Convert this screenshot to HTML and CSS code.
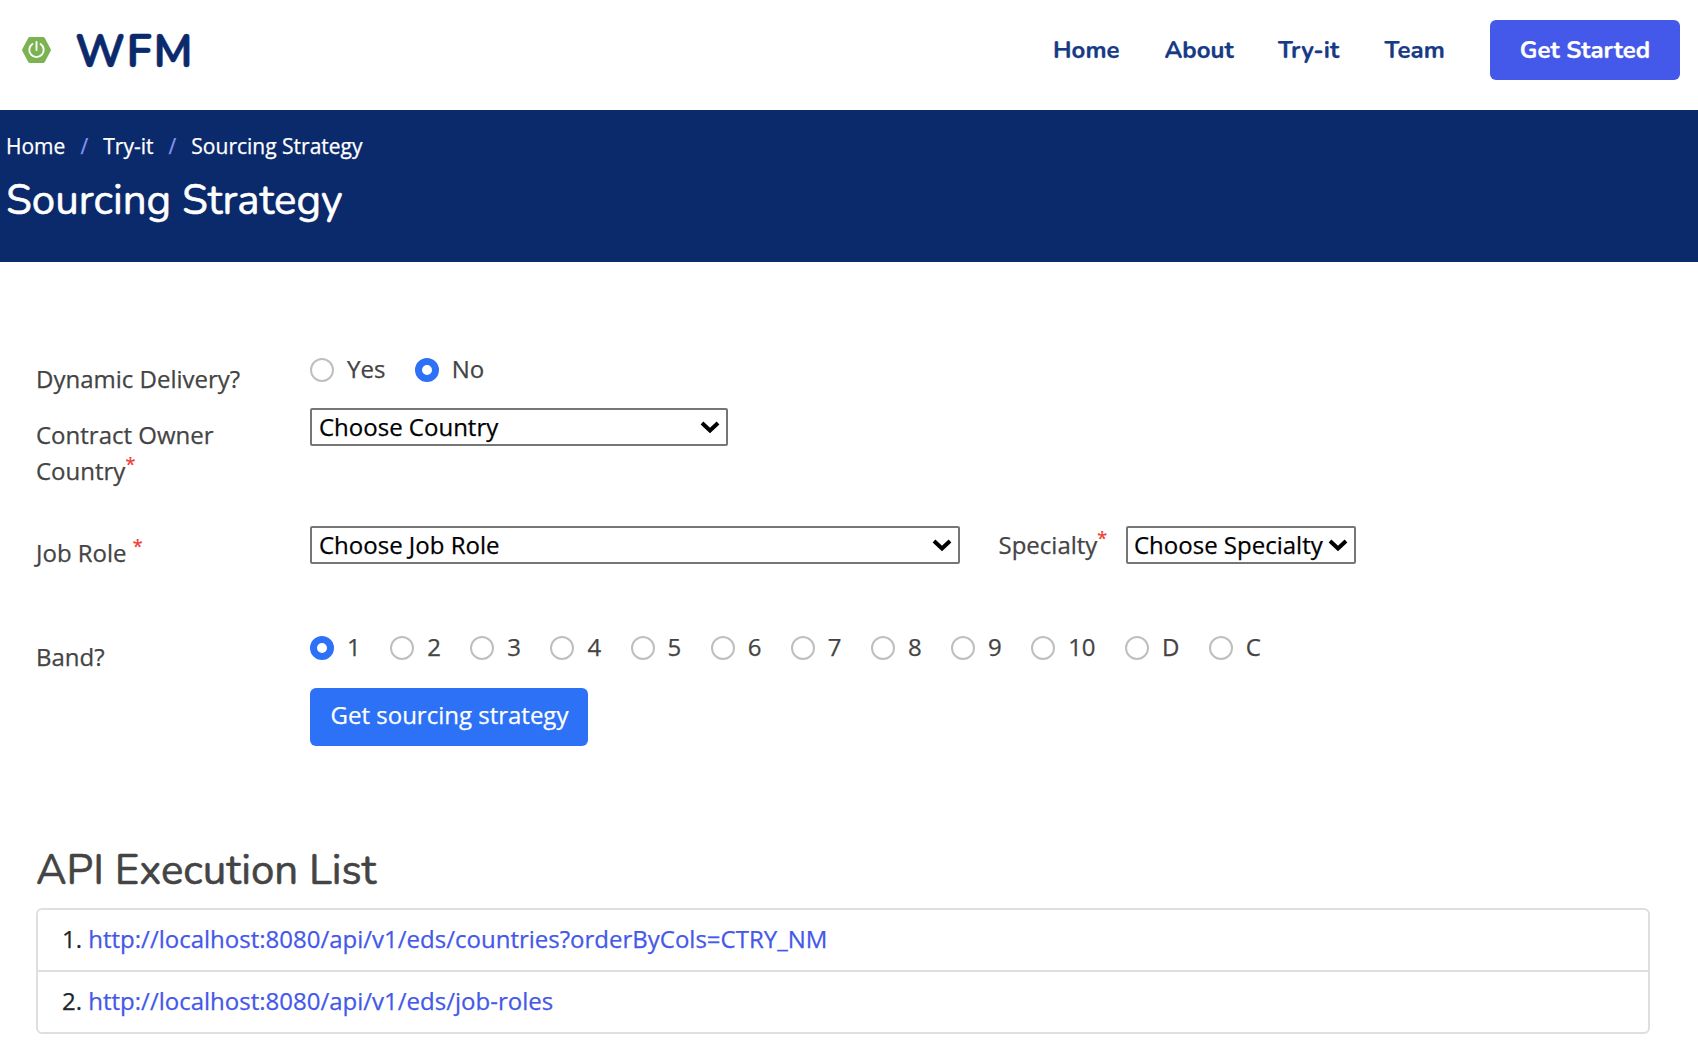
FILE: index.html
```html
<!DOCTYPE html>
<html lang="en">
<head>
<meta charset="utf-8">
<title>WFM - Sourcing Strategy</title>
<link rel="stylesheet" href="styles.css">
</head>
<body>
<header class="header">
  <a class="logo" href="#">
    <svg class="logo-mark" viewBox="0 0 29 26"><path d="M8 0h13q1.200 0 1.800 1L28.600 12q.5 1 0 2L22.800 25q-.6 1-1.800 1H8q-1.200 0-1.800-1L.4 14q-.5-1 0-2L6.200 1Q6.800 0 8 0z" fill="#7bb252"/><path d="M10.400 7a7.200 7.200 0 1 0 8.200 0M14.500 5v8" fill="none" stroke="#fff" stroke-width="1.900" stroke-linecap="round"/></svg>
    <span class="logo-text">WFM</span>
  </a>
  <nav class="nav">
    <a class="nav-link home" href="#">Home</a>
    <a class="nav-link about" href="#">About</a>
    <a class="nav-link try" href="#">Try-it</a>
    <a class="nav-link team" href="#">Team</a>
    <a class="get-started" href="#"><span>Get Started</span></a>
  </nav>
</header>
<section class="breadcrumbs">
  <ol class="crumbs"><li>Home</li><li class="sep">/</li><li>Try-it</li><li class="sep">/</li><li>Sourcing Strategy</li></ol>
  <h2 class="page-title"><span>Sourcing Strategy</span></h2>
</section>
<main class="main">
  <form class="form">
    <div class="row delivery">
      <span class="label">Dynamic Delivery?</span>
      <div class="radios">
        <label class="radio"><input type="radio" name="dd">Yes</label>
        <label class="radio"><input type="radio" name="dd" checked>No</label>
      </div>
    </div>
    <div class="row country">
      <span class="label">Contract Owner Country<sup>*</sup></span>
      <div class="select country-select"><span>Choose Country</span><svg class="chevron" viewBox="0 0 20 13"><path d="M2 2l8 7.500L18 2" fill="none" stroke="#000" stroke-width="4"/></svg></div>
    </div>
    <div class="row role">
      <span class="label">Job Role <sup>*</sup></span>
      <div class="select role-select"><span>Choose Job Role</span><svg class="chevron" viewBox="0 0 20 13"><path d="M2 2l8 7.500L18 2" fill="none" stroke="#000" stroke-width="4"/></svg></div>
      <span class="specialty">Specialty<sup>*</sup></span>
      <div class="select specialty-select"><span>Choose Specialty</span><svg class="chevron" viewBox="0 0 20 13"><path d="M2 2l8 7.500L18 2" fill="none" stroke="#000" stroke-width="4"/></svg></div>
    </div>
    <div class="row band">
      <span class="label">Band?</span>
      <div class="radios">
        <label class="radio"><input type="radio" name="band" checked>1</label>
        <label class="radio"><input type="radio" name="band">2</label>
        <label class="radio"><input type="radio" name="band">3</label>
        <label class="radio"><input type="radio" name="band">4</label>
        <label class="radio"><input type="radio" name="band">5</label>
        <label class="radio"><input type="radio" name="band">6</label>
        <label class="radio"><input type="radio" name="band">7</label>
        <label class="radio"><input type="radio" name="band">8</label>
        <label class="radio"><input type="radio" name="band">9</label>
        <label class="radio"><input type="radio" name="band">10</label>
        <label class="radio"><input type="radio" name="band">D</label>
        <label class="radio"><input type="radio" name="band">C</label>
      </div>
    </div>
    <button class="submit" type="button">Get sourcing strategy</button>
  </form>
  <h2 class="list-title"><span>API Execution List</span></h2>
  <ol class="api-list">
    <li><span>1. </span><a href="#">http://localhost:8080/api/v1/eds/countries?orderByCols=CTRY_NM</a></li>
    <li><span>2. </span><a href="#">http://localhost:8080/api/v1/eds/job-roles</a></li>
  </ol>
</main>
</body>
</html>
```
FILE: styles.css
```css
* { box-sizing: border-box; }
body { margin: 0; background: #fff; color: #444; font: 24px/36px "Open Sans", sans-serif; -webkit-text-stroke: .25px; overflow: hidden; }
a { text-decoration: none; color: #4458e9; }
.header { height: 110px; padding: 20px 18px 30px 22px; display: flex; justify-content: space-between; align-items: center; font-family: Nunito, Lato, sans-serif; }
.logo { display: flex; align-items: center; }
.logo-mark { width: 29px; height: 26px; margin-right: 24px; }
.logo-text { font-size: 45px; font-weight: 700; line-height: 60px; padding-top: 4px; margin-bottom: -1px; color: #0b2a6b; letter-spacing: 1.5px; -webkit-text-stroke: .5px; }
.nav { display: flex; align-items: center; font-weight: 700; font-size: 24px; }
.nav-link { color: #163a85; white-space: nowrap; }
.home { width: 111.500px; }
.about { width: 113.500px; }
.try { width: 106.500px; }
.team { width: 105.500px; }
.get-started { width: 190px; height: 60px; line-height: 60px; border-radius: 6px; background: #4458e9; color: #fff; text-align: center; }
.breadcrumbs { height: 152px; background: #0b2a6b; color: #fff; padding: 20px 6px; }
.crumbs { list-style: none; display: flex; margin: 0; padding: 0; font-size: 21px; line-height: 33px; }
.sep { color: #8894f6; padding: 0 15.100px; }
.page-title { margin: 13px 0 0; font: 400 42px/50px Nunito, Lato, sans-serif; -webkit-text-stroke: .6px; }
.main { padding: 90px 48px 0 36px; }
.row { display: flex; align-items: flex-start; }
.label { width: 274px; padding-right: 40px; padding-top: 9px; }
sup { color: #f03a2e; font-size: 18px; line-height: 0; vertical-align: super; }
.delivery { height: 56px; }
.delivery .radio { height: 34px; padding-bottom: 0; }
.delivery .radio input { margin-top: 2px; }
.country { height: 118px; }
.role { height: 103px; }
.band { height: 59px; }
.band .label { padding-top: 10px; }
.band .radio input { margin-top: 1px; }
.radios { display: flex; gap: 29.400px; }
.radio { display: flex; align-items: center; height: 36px; }
.radio input { appearance: none; width: 24px; height: 24px; border: 2px solid #bfbfbf; border-radius: 50%; margin: 0 13px 0 0; }
.radio input:checked { border: 7px solid #2c71f6; }
.select { height: 38px; border: 2px solid #767676; border-radius: 2px; color: #000; display: flex; align-items: center; justify-content: space-between; padding: 0 6px 0 7px; white-space: nowrap; }
.chevron { width: 20px; height: 13px; flex: none; }
.country-select { width: 418px; }
.role-select { width: 650px; }
.specialty { width: 127.500px; margin-left: 38.500px; padding-top: 1px; }
.specialty-select { width: 230px; padding-left: 6px; }
.submit { display: block; margin-left: 274px; width: 278px; height: 58px; border: 0; border-radius: 6px; padding: 0 0 4px 1px; background: #2c71f6; color: #fff; font: inherit; -webkit-text-stroke: inherit; }
.list-title { margin: 99px 0 11px; font: 400 42px/52px Nunito, Lato, sans-serif; -webkit-text-stroke: .6px; }
.api-list { list-style: none; margin: 0; padding: 0; border: 2px solid #dfdfdf; border-radius: 6px; color: #212529; }
.api-list li { height: 60px; padding: 11px 24px; white-space: pre; }
.api-list li + li { border-top: 2px solid #dfdfdf; height: 62px; }
```
